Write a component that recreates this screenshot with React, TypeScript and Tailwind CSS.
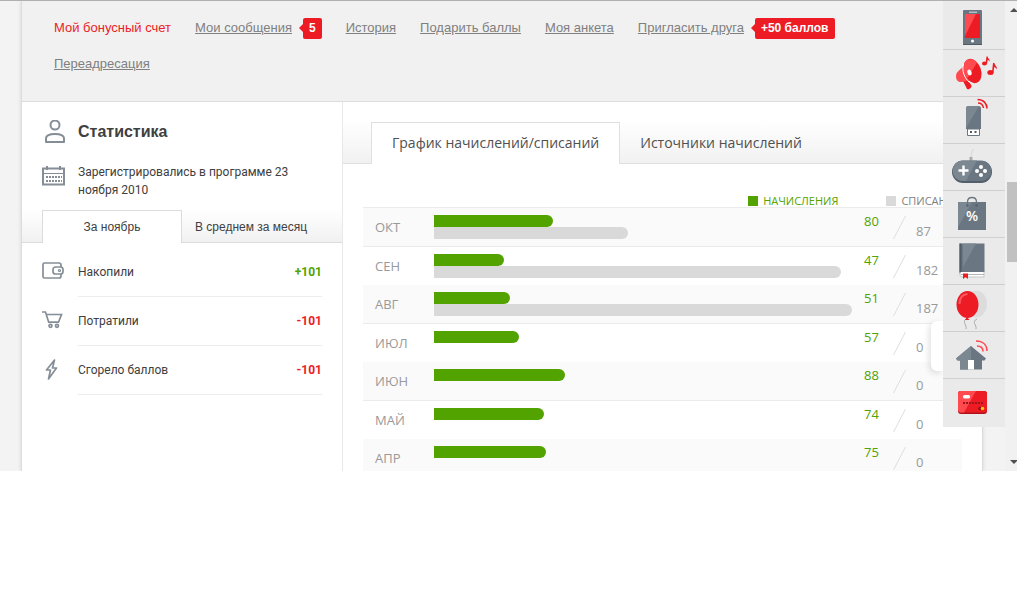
import { useState, type ReactNode } from "react";

const navLinks = [
  { title: "Мой бонусный счет", active: true },
  { title: "Мои сообщения", badge: "5" },
  { title: "История" },
  { title: "Подарить баллы" },
  { title: "Моя анкета" },
  { title: "Пригласить друга", badge: "+50 баллов" },
  { title: "Переадресация" },
];

const months = [
  { name: "ОКТ", added: 80, spent: 87 },
  { name: "СЕН", added: 47, spent: 182 },
  { name: "АВГ", added: 51, spent: 187 },
  { name: "ИЮЛ", added: 57, spent: 0 },
  { name: "ИЮН", added: 88, spent: 0 },
  { name: "МАЙ", added: 74, spent: 0 },
  { name: "АПР", added: 75, spent: 0 },
];

const ADDED_MAX = 280;
const SPENT_MAX = 187;

function Navigation() {
  return (
    <nav className="border-b border-[#dcdcdc] bg-[#f1f1f1] pt-[9px] pb-[19px] pl-8 pr-[60px]">
      <ul className="flex flex-wrap gap-x-6 text-[13px] leading-9">
        {navLinks.map((link) => (
          <li key={link.title} className="flex items-center">
            <a
              href="#"
              className={link.active ? "text-[#ed1c24]" : "text-[#808080] underline"}
            >
              {link.title}
            </a>
            {link.badge && (
              <span className="ml-[7px] flex items-center">
                <svg width="4" height="8" viewBox="0 0 4 8">
                  <path d="M4 0v8L0 4z" fill="#ed1c24" />
                </svg>
                <span className="rounded-xs bg-[#ed1c24] px-1.5 text-xs font-bold leading-[21px] text-white">
                  {link.badge}
                </span>
              </span>
            )}
          </li>
        ))}
      </ul>
    </nav>
  );
}

function UserIcon() {
  return (
    <svg width="24" height="24" viewBox="0 0 24 24" fill="none" stroke="#858e97" strokeWidth="2">
      <circle cx="13" cy="5" r="4.500" />
      <path d="M4 22v-3.500c0-3 3-4.500 9-4.500s9 1.500 9 4.500v3.500z" strokeLinejoin="round" />
    </svg>
  );
}

function CalendarIcon() {
  return (
    <svg width="24" height="20" viewBox="0 0 24 20" fill="none" stroke="#858e97">
      <path d="M1 2.500h21v16H1z" strokeWidth="2" />
      <path d="M1 7.500h21" strokeWidth="1" />
      <path d="M5 0v4M18 0v4" strokeWidth="2" />
      <path d="M4 11h16M4 15h16" strokeWidth="2" strokeDasharray="2 1" />
    </svg>
  );
}

function WalletIcon() {
  return (
    <svg width="24" height="20" viewBox="0 0 24 20" fill="none" stroke="#858e97" strokeWidth="1.700">
      <path d="M19 6V4c0-1.500-.5-2-2-2H2.500C1.500 2 1 2.500 1 3.500v12c0 1 .5 1.500 1.500 1.500H17c1.500 0 2-.5 2-2v-2" />
      <rect x="11" y="6" width="10" height="7" rx="2.500" />
      <circle cx="17.500" cy="9.500" r="1" strokeWidth="1.200" />
    </svg>
  );
}

function CartIcon() {
  return (
    <svg width="24" height="20" viewBox="0 0 24 20" fill="none" stroke="#858e97" strokeWidth="1.700">
      <path d="M0 2h3.500l3.200 10.200h9.800L19.500 4.500H4.500" />
      <circle cx="8.500" cy="15.800" r="1.500" />
      <circle cx="15" cy="15.800" r="1.500" />
    </svg>
  );
}

function LightningIcon() {
  return (
    <svg width="24" height="24" viewBox="0 0 24 24" fill="none" stroke="#858e97" strokeWidth="1.700">
      <path d="M12.500 3L4.500 13H8.500L6.500 22L14.500 11H10.500z" strokeLinejoin="round" />
    </svg>
  );
}

const totals = [
  { title: "Накопили", value: "+101", icon: <WalletIcon />, color: "text-[#52a300]" },
  { title: "Потратили", value: "-101", icon: <CartIcon />, color: "text-[#ed1c24]" },
  { title: "Сгорело баллов", value: "-101", icon: <LightningIcon />, color: "text-[#ed1c24]" },
];

function Statistics() {
  const [tab, setTab] = useState(0);
  return (
    <section className="w-[321px] shrink-0 border-r border-[#e9e9e9] text-[#404040]">
      <div className="flex items-center pt-4 pl-5">
        <div className="w-9">
          <UserIcon />
        </div>
        <h2 className="text-base font-bold leading-7">Статистика</h2>
      </div>
      <div className="flex pt-[17px] pl-5 pr-12">
        <div className="w-9 shrink-0 pt-[3px]">
          <CalendarIcon />
        </div>
        <p className="font-['Roboto','Noto_Sans',sans-serif] text-xs leading-[18px]">
          Зарегистрировались в программе 23 ноября 2010
        </p>
      </div>
      <div className="mt-[11px] flex border-b border-[#dcdcdc] bg-linear-to-b from-white to-[#f1f1f1] pl-5 text-xs">
        {["За ноябрь", "В среднем за месяц"].map((title, i) => (
          <button
            key={title}
            type="button"
            onClick={() => setTab(i)}
            className={
              tab === i
                ? "-mb-px h-[33px] w-[140px] border border-b-0 border-[#dcdcdc] bg-white"
                : "h-[33px] -mb-px px-[13px]"
            }
          >
            {title}
          </button>
        ))}
      </div>
      <ul className="pt-[5px] pl-5 pr-5 font-['Roboto','Noto_Sans',sans-serif] text-xs">
        {totals.map((item) => (
          <li key={item.title} className="flex">
            <span className="flex h-[46px] w-9 items-center">{item.icon}</span>
            <span className="flex h-[49px] flex-1 items-center justify-between border-b border-[#ededed]">
              {item.title}
              <b className={item.color}>{item.value}</b>
            </span>
          </li>
        ))}
      </ul>
    </section>
  );
}

function Chart() {
  const [tab, setTab] = useState(0);
  return (
    <section className="min-w-0 flex-1 font-['Open_Sans','Noto_Sans',sans-serif]">
      <div className="flex border-b border-[#e0e0e0] bg-linear-to-b from-white from-30% to-[#f1f1f1] pt-5 pl-7 text-sm text-[#505050]">
        {["График начислений/списаний", "Источники начислений"].map((title, i) => (
          <button
            key={title}
            type="button"
            onClick={() => setTab(i)}
            className={
              tab === i
                ? "-mb-px h-[42px] border border-b-0 border-[#e0e0e0] bg-white px-5 pb-0.5"
                : "h-[41px] px-5"
            }
          >
            {title}
          </button>
        ))}
      </div>
      <div className="px-5 pt-[30px]">
        <div className="flex justify-end gap-12 text-[11px] leading-[13px]">
          <span className="flex items-center gap-[5px] text-[#52a300]">
            <i className="size-2.5 bg-[#52a300]" />
            НАЧИСЛЕНИЯ
          </span>
          <span className="flex items-center gap-[5px] text-[#808080]">
            <i className="size-2.5 bg-[#d9d9d9]" />
            СПИСАНИЯ
          </span>
        </div>
        <table className="w-full table-fixed border-separate border-spacing-0 border-t border-[#ebebeb] text-[13px]">
          <tbody>
            {months.map((month, i) => {
              const last = i === months.length - 1;
              const cell = i % 2 === 0 ? "bg-[#fafafa] p-0" : "p-0";
              const line = i % 2 === 0 && !last ? " border-b border-[#ebebeb]" : "";
              return (
                <tr key={month.name} className="align-top">
                  <th
                    scope="row"
                    className={"w-[71px] text-left font-normal text-[#999] " + cell + line}
                  >
                    <div className="pt-[9px] pl-3 leading-5">{month.name}</div>
                  </th>
                  <td className={cell + line}>
                    <div className="pt-[7px]">
                      <div
                        className="h-3 rounded-r-full bg-[#52a300]"
                        style={{ width: `${(month.added / ADDED_MAX) * 100}%` }}
                      />
                      <div
                        className="h-3 rounded-r-full bg-[#d9d9d9]"
                        style={{ width: `${(month.spent / SPENT_MAX) * 100}%` }}
                      />
                    </div>
                  </td>
                  <td className={"w-[110px] " + cell + line}>
                    <div className={last ? "flex h-8 pl-3" : "flex h-[38px] pl-3"}>
                      <span className="w-[29px] pt-[3px] leading-5 text-[#52a300]">{month.added}</span>
                      <svg className="mt-[7px]" width="13" height="25" viewBox="0 0 13 25">
                        <path d="M0.500 24L12.500 1" stroke="#dedede" />
                      </svg>
                      <span className="pt-3.5 pl-2.5 leading-[18px] text-[#999]">{month.spent}</span>
                    </div>
                  </td>
                </tr>
              );
            })}
          </tbody>
        </table>
      </div>
    </section>
  );
}

const services: { title: string; art: ReactNode }[] = [
  {
    title: "Мобильная связь",
    art: (
      <>
        <rect x="20" y="7" width="19" height="35" rx="1" fill="#6a7782" />
        <path d="M20 41h19v1H20z" fill="#4f5b65" />
        <path d="M26 8.500h8v1.500h-8z" fill="#b4bbc1" />
        <path d="M22 11h15v24H22z" fill="#ed1c24" />
        <path d="M22 11h11l-11 22z" fill="#ff4a50" />
        <circle cx="29.500" cy="38" r="1.500" fill="#fff" />
      </>
    ),
  },
  {
    title: "Музыка",
    art: (
      <>
        <path d="M20 31l4-2 4.500 6.500c.5 2-2.500 4.500-4.500 3.500z" fill="#ed1c24" />
        <path d="M21 15c-2 4-8 6-8 11 0 4 2 6 5 6 3-.5 5-1 8-1z" fill="#ff4a50" />
        <ellipse cx="29.500" cy="21" rx="8.500" ry="12.500" transform="rotate(-20 29.500 21)" fill="#ed1c24" />
        <path d="M22 12c3-4 9-3.500 12 .5L24 29c-4-5-5-12-2-17z" fill="#ff4a50" />
        <path d="M20.500 14c-2 7 1 14 6 18.500" fill="none" stroke="#fff" strokeWidth="1" />
        <ellipse cx="26.500" cy="22.500" rx="2" ry="3" transform="rotate(-20 26.500 22.500)" fill="#fff" />
        <g fill="#ed1c24">
          <ellipse cx="41.500" cy="13.500" rx="2.500" ry="2" />
          <path d="M42.500 13.500l1-7h1.200c0 2 2.300 2.500 2 5-1-1.500-1.500-1.500-2-1.500l-.7 4z" />
          <ellipse cx="47.500" cy="22.500" rx="3.200" ry="2.500" />
          <path d="M49 22l1-9h1.500c0 2.500 2.800 3 2.500 6.500-1-2-2-2.200-2.800-2.300l-.7 5z" />
        </g>
      </>
    ),
  },
  {
    title: "Мобильный интернет",
    art: (
      <>
        <path d="M23 11.500c0-1.500 1-2.500 2-2.500h11c1 0 2 1 2 2.500V32H23z" fill="#6a7782" />
        <path d="M23 11.500c0-1.500 1-2.500 2-2.500h11L23 31z" fill="#7b8791" />
        <path d="M24.500 32h12v6.500h-12z" fill="#fff" stroke="#6a7782" />
        <path d="M27 34h2v2h-2zM31.500 34h2v2h-2z" fill="#4f5b65" />
        <path d="M35 6c3 0 5 2 5.500 5M34.500 2.500c6 0 9.500 4 9.500 9" fill="none" stroke="#ed1c24" strokeWidth="1.500" />
      </>
    ),
  },
  {
    title: "Игры",
    art: (
      <>
        <path d="M28 16c0-4 0-7 2.500-11" fill="none" stroke="#d5d5d5" />
        <path d="M26.500 13h3v4h-3z" fill="#aaa" />
        <rect x="9" y="17" width="40" height="22" rx="11" fill="#53606b" />
        <rect x="9.500" y="16.500" width="39" height="20.500" rx="10" fill="#6a7782" />
        <path d="M20 16.500h14L23 37h-3C6.500 37 6.500 16.500 20 16.500z" fill="#7b8791" />
        <path d="M20.500 21.500v10M15.500 26.500h10" stroke="#fff" strokeWidth="2.400" />
        <g fill="#fff">
          <circle cx="38" cy="23" r="2" />
          <circle cx="38" cy="31" r="2" />
          <circle cx="34" cy="27" r="2" />
          <circle cx="42" cy="27" r="2" />
        </g>
      </>
    ),
  },
  {
    title: "Скидки",
    art: (
      <>
        <path d="M15 11h28v28H15z" fill="#6a7782" />
        <path d="M15 11h14L15 36z" fill="#7b8791" />
        <path d="M24.500 14v-3c0-6 9-6 9 0v3" fill="none" stroke="#6a7782" strokeWidth="1.300" />
        <path d="M23.500 13.500h2v2h-2zM32.500 13.500h2v2h-2z" fill="#4f5b65" />
        <text
          x="29"
          y="30"
          textAnchor="middle"
          fill="#fff"
          className="font-['Open_Sans','Noto_Sans',sans-serif] text-sm font-semibold"
        >
          %
        </text>
      </>
    ),
  },
  {
    title: "Книги",
    art: (
      <>
        <path d="M17 33h24v6H19c-2 0-2-2-2-3z" fill="#fff" stroke="#c5c5c5" />
        <path d="M18 36.500h23" stroke="#b5b5b5" />
        <path d="M16.500 5.500h25V34h-23c-1 0-2 1-2 2z" fill="#6a7782" />
        <path d="M20 5.500h13L20 29z" fill="#7b8791" />
        <path d="M17.500 5.500V34" stroke="#4f5b65" strokeWidth="2" />
        <path d="M20 35.500h5v5.500l-2.500-2-2.500 2z" fill="#ed1c24" />
      </>
    ),
  },
  {
    title: "Праздники",
    art: (
      <>
        <ellipse cx="33.500" cy="19" rx="10.500" ry="13.500" fill="#dcdcdc" />
        <path d="M23 34c-4 3 1 6 0 10M34 34c-6 3 0 6-1 10" fill="none" stroke="#aaa" />
        <path d="M24 32l-2 3h4.500z" fill="#ed1c24" />
        <ellipse cx="24.500" cy="19.500" rx="11" ry="13.500" fill="#ed1c24" />
        <path d="M16.500 19c0-6 3-9.500 8-10" fill="none" stroke="#ff5a60" strokeWidth="2" />
      </>
    ),
  },
  {
    title: "Умный дом",
    art: (
      <>
        <path d="M28 14L13 26.500l1.500 2H17v9h22v-9h2.500l1.500-2z" fill="#6a7782" />
        <path d="M28 14L13 26.500l1.500 2H17v9h11z" fill="#7b8791" />
        <path d="M25 28h6v9.500h-6z" fill="#fff" />
        <path d="M34 14c4 0 6 2 6 5.500M33 9c7 0 11 4 11 10" fill="none" stroke="#ff4a50" strokeWidth="1.500" />
      </>
    ),
  },
  {
    title: "Банковская карта",
    art: (
      <>
        <rect x="15" y="12" width="29" height="23" rx="3" fill="#b0141a" />
        <rect x="15" y="12" width="29" height="21.500" rx="3" fill="#ed1c24" />
        <path d="M18 12h15L21 33.500h-3c-2 0-3-1-3-3V15c0-2 1-3 3-3z" fill="#ff4a50" />
        <rect x="20" y="16" width="7" height="3.500" rx="1.500" fill="#fff" />
        <path d="M20 24h20" stroke="#a3141a" strokeWidth="2" strokeDasharray="2 1" />
        <circle cx="37" cy="29.500" r="1.800" fill="#8f1014" />
        <circle cx="39.500" cy="29.500" r="1.800" fill="#ffc20e" />
      </>
    ),
  },
];

function ServiceBar() {
  return (
    <div className="absolute top-0 right-0">
      <div className="absolute top-80 right-[62px] h-[50px] w-3 rounded-l-md bg-white shadow-[-2px_2px_6px_rgba(0,0,0,0.12)]" />
      <ul className="relative w-[62px] bg-[#eaeaea] pt-0.5 pb-[2px]">
        {services.map((service) => (
          <li key={service.title} className="border-b border-[#cfcfcf] last:border-0">
            <a href="#" aria-label={service.title} className="block">
              <svg className="block" width="62" height="46" viewBox="0 0 62 46">
                {service.art}
              </svg>
            </a>
          </li>
        ))}
      </ul>
    </div>
  );
}

function ScrollBar() {
  return (
    <div className="flex w-3 shrink-0 flex-col overflow-hidden bg-[#f1f1f1] pl-0.5">
      <svg className="mt-[7px] ml-[3px] shrink-0" width="8" height="4" viewBox="0 0 8 4">
        <path d="M0 4l4-4 4 4z" fill="#505050" />
      </svg>
      <div className="mt-[170px] h-20 bg-[#c1c1c1]" />
      <svg className="mt-auto mb-[7px] ml-[3px] shrink-0" width="8" height="4" viewBox="0 0 8 4">
        <path d="M0 0l4 4 4-4z" fill="#505050" />
      </svg>
    </div>
  );
}

export default function App() {
  return (
    <div className="min-h-screen bg-white pr-[7px] font-['Liberation_Sans',Arial,sans-serif]">
      <div className="flex border-t border-[#b0b0b0] bg-[#f3f3f3]">
        <div className="relative min-w-0 flex-1 overflow-hidden pl-[21px] pr-[22px]">
          <main className="border-x border-[#dcdcdc] bg-white shadow-[0_0_4px_rgba(0,0,0,0.12)]">
            <Navigation />
            <div className="flex">
              <Statistics />
              <Chart />
            </div>
          </main>
          <ServiceBar />
        </div>
        <ScrollBar />
      </div>
    </div>
  );
}
